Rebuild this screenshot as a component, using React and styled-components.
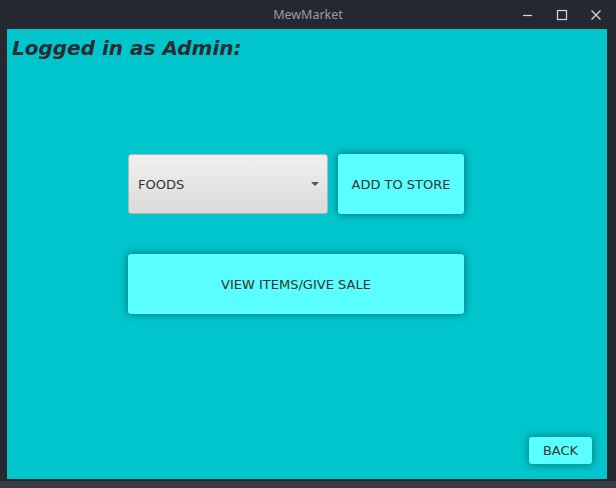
import styled, { createGlobalStyle } from 'styled-components';

const GlobalStyle = createGlobalStyle`
  html, body {
    margin: 0;
    padding: 0;
    background: #262830;
  }
  * {
    box-sizing: border-box;
  }
`;

const Frame = styled.div`
  width: 616px;
  height: 488px;
  display: flex;
  flex-direction: column;
  background: #262830;
  font-family: 'DejaVu Sans', 'Liberation Sans', sans-serif;
`;

const TitleBar = styled.div`
  position: relative;
  height: 29px;
  display: flex;
  align-items: center;
  justify-content: center;
  color: #9a9ca4;
  font-family: 'Noto Sans', 'DejaVu Sans', sans-serif;
  font-size: 12.5px;
`;

const WindowControls = styled.div`
  position: absolute;
  right: 12px;
  top: 0;
  height: 29px;
  display: flex;
  align-items: center;
  gap: 18px;
`;

const ControlIcon = styled.svg`
  width: 16px;
  height: 16px;
  stroke: #d8dae0;
  stroke-width: 1.2;
  fill: none;
`;

const Body = styled.div`
  display: flex;
  flex: 1;
  padding: 0 9px 0 7px;
`;

const Content = styled.main`
  flex: 1;
  display: flex;
  flex-direction: column;
  background: #00c5cc;
  padding: 6px 15px 15px 5px;
`;

const Heading = styled.h1`
  margin: 0;
  font-size: 20px;
  font-weight: bold;
  font-style: italic;
  color: #2b2c33;
  line-height: 26px;
`;

const Actions = styled.div`
  display: grid;
  grid-template-columns: 200px 126px;
  grid-auto-rows: 60px;
  column-gap: 10px;
  row-gap: 40px;
  margin: 93px 0 0 116px;
`;

const Select = styled.div`
  display: flex;
  align-items: center;
  justify-content: space-between;
  padding: 0 8px 0 9px;
  border: 1px solid #b4b6b6;
  border-radius: 3px;
  background: linear-gradient(#f0f0f0, #dadada);
  color: #333;
  font-size: 13px;
`;

const Caret = styled.span`
  width: 0;
  height: 0;
  border-left: 4px solid transparent;
  border-right: 4px solid transparent;
  border-top: 4px solid #555;
`;

const CyanButton = styled.button`
  border: none;
  border-radius: 3px;
  background: #5affff;
  color: #333;
  font-family: inherit;
  font-size: 13px;
  padding: 0;
  box-shadow: 0 0 7px 1px rgba(0, 70, 75, 0.55);
  grid-column: ${(p) => (p.$wide ? '1 / span 2' : 'auto')};
`;

const Footer = styled.div`
  margin-top: auto;
  display: flex;
  justify-content: flex-end;
`;

const BackButton = styled(CyanButton)`
  width: 63px;
  height: 27px;
`;

const BottomEdge = styled.div`
  height: 9px;
  border-top: 2px solid #262830;
  background: #3b3d45;
`;

export default function App() {
  return (
    <Frame>
      <GlobalStyle />
      <TitleBar>
        MewMarket
        <WindowControls>
          <ControlIcon viewBox="0 0 16 16">
            <path d="M3 8.5h9" />
          </ControlIcon>
          <ControlIcon viewBox="0 0 16 16">
            <rect x="3.5" y="3.5" width="9" height="9" />
          </ControlIcon>
          <ControlIcon viewBox="0 0 16 16">
            <path d="M3.5 3.5l9 9M12.5 3.5l-9 9" />
          </ControlIcon>
        </WindowControls>
      </TitleBar>
      <Body>
        <Content>
          <Heading>Logged in as Admin:</Heading>
          <Actions>
            <Select>
              FOODS
              <Caret />
            </Select>
            <CyanButton>ADD TO STORE</CyanButton>
            <CyanButton $wide>VIEW ITEMS/GIVE SALE</CyanButton>
          </Actions>
          <Footer>
            <BackButton>BACK</BackButton>
          </Footer>
        </Content>
      </Body>
      <BottomEdge />
    </Frame>
  );
}
